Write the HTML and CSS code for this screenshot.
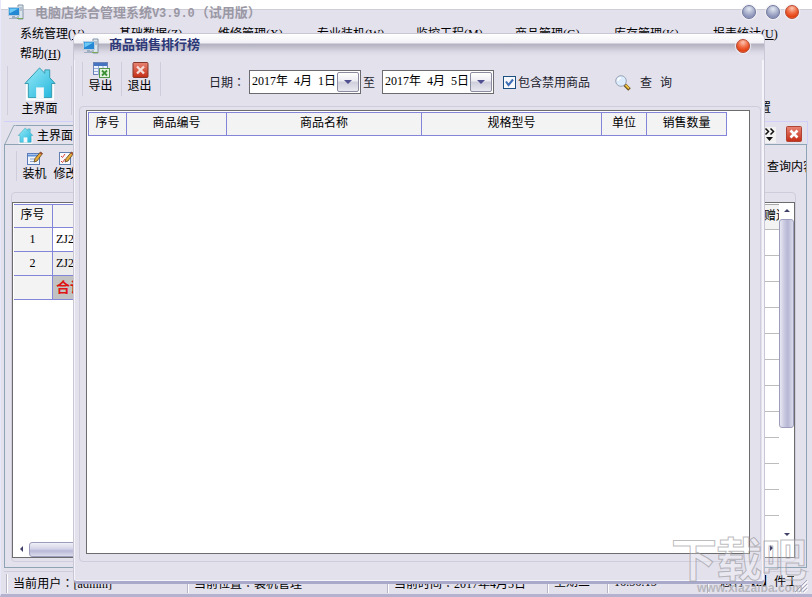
FILE: index.html
```html
<!doctype html>
<html lang="zh-CN">
	<head>
		<meta charset="utf-8" />
		<title>电脑店综合管理系统V3.9.0</title>
		<link rel="stylesheet" href="styles.css">
	</head>
	<body>
		<svg class="symbols">
			<defs>
				<linearGradient id="g_cyan" x1="0" y1="0" x2="1" y2="1">
					<stop offset="0" stop-color="#9cecf8"/>
					<stop offset="1" stop-color="#1eb4dc"/>
				</linearGradient>
				<linearGradient id="g_red" x1="0" y1="0" x2="0" y2="1">
					<stop offset="0" stop-color="#e88474"/>
					<stop offset="1" stop-color="#c42c14"/>
				</linearGradient>
			</defs>
			<symbol id="i_computer" viewBox="0 0 16 16">
				<path d="M10 1h5v14h-5z" fill="#dce4ec" stroke="#8496a8"/>
				<path d="M11 4h3M11 6h3" stroke="#8c9cac"/>
				<path d="M.5 3.500h11v8h-11z" fill="#2488d4" stroke="#b8cce0"/>
				<path d="M1.500 4.500h9l-9 5z" fill="#6cc8f4"/>
				<path d="M4 12h3v1h2v2H1v-1h3z" fill="#a0b0c0"/>
				<path d="M9 14.500h6" stroke="#78aa58"/>
			</symbol>
			<symbol id="i_house" viewBox="0 0 34 36">
				<path d="M4 17v17h26V17" fill="#fff" stroke="#fff" stroke-width="3"/>
				<path d="M16.500 2L1.500 18H5v14.500h24V18h3.500L27 12V4h-5v3.500z" fill="url(#g_cyan)" stroke="#3498ac"/>
				<path d="M13 22h8v11h-8z" fill="#f4f8fa"/>
			</symbol>
			<symbol id="i_pencil" viewBox="0 0 10 12">
				<path d="M1 11l1-3.500L7.500 1l2 1.500L4 10z" fill="#e8ac38" stroke="#5c4420" stroke-width=".8"/>
				<path d="M7 1.500l2 1.800" stroke="#a04838" stroke-width="1.500"/>
			</symbol>
			<symbol id="i_close" viewBox="0 0 16 16">
				<rect x=".5" y=".5" width="15" height="15" rx="1" fill="url(#g_red)" stroke="#b04434"/>
				<path d="M4.500 4.500l7 7M11.500 4.500l-7 7" stroke="#fff" stroke-width="2.600"/>
			</symbol>
		</svg>

		<div class="main_window">
			<header class="main_title">
				<svg class="title_icon"><use href="#i_computer"/></svg>
				<span class="title_text">电脑店综合管理系统<span class="version">V3.9.0</span><span class="trial">（试用版）</span></span>
				<span class="ball"></span>
				<span class="ball ball_max"></span>
				<span class="ball ball_red"></span>
			</header>
			<nav class="menu">
				<span>系统管理(<u>V</u>)</span>
				<span>基础数据(<u>Z</u>)</span>
				<span>维修管理(<u>X</u>)</span>
				<span>专业装机(<u>W</u>)</span>
				<span>监控工程(<u>M</u>)</span>
				<span>商品管理(<u>G</u>)</span>
				<span>库存管理(<u>K</u>)</span>
				<span>报表统计(<u>U</u>)</span>
				<span>帮助(<u>H</u>)</span>
			</nav>
			<div class="big_bar">
				<div class="big_button">
					<svg class="big_house"><use href="#i_house"/></svg>
					<span>主界面</span>
				</div>
				<div class="big_right">设置</div>
			</div>
			<div class="tabs">
				<svg class="tab_edge" viewBox="0 0 12 21"><path d="M.5 20.500L10 .5H12" fill="none" stroke="#8ea4b4"/></svg>
				<div class="tab">
					<svg class="tab_house"><use href="#i_house"/></svg>
					<span>主界面</span>
				</div>
				<div class="tab_fill"></div>
				<div class="tab_tools">
					<svg class="more" viewBox="0 0 12 16"><path d="M1.500 1.500l3 3-3 3M6.500 1.500l3 3-3 3" fill="none" stroke="#111" stroke-width="1.500"/><path d="M2 10h7l-3.500 4z" fill="#111"/></svg>
					<svg class="tab_close"><use href="#i_close"/></svg>
				</div>
			</div>
			<div class="page">
				<div class="page_bar">
					<div class="small_button">
						<svg class="small_icon" viewBox="0 0 16 15">
							<rect x=".5" y="2.500" width="12" height="11" fill="#f0f4fc" stroke="#5c7cb8"/>
							<path d="M1 3.500h11v2H1z" fill="#5c90d8"/>
							<path d="M3 8h6M3 10.500h4" stroke="#8ca4cc"/>
							<use href="#i_pencil" x="6" y="0" width="10" height="12"/>
						</svg>
						<span>装机</span>
					</div>
					<div class="small_button">
						<svg class="small_icon" viewBox="0 0 16 15">
							<rect x="1.500" y="1.500" width="11" height="12" fill="#fafafe" stroke="#6080b0"/>
							<path d="M3 5l1.500 1.500L7 3M3 10l1.500 1.500L7 8" fill="none" stroke="#d8443c"/>
							<use href="#i_pencil" x="6" y="0" width="10" height="12"/>
						</svg>
						<span>修改</span>
					</div>
					<div class="find_label">查询内容</div>
				</div>
				<div class="group">
					<div class="list">
						<div class="list_left">
							<div class="row head"><b>序号</b><i></i></div>
							<div class="row"><b>1</b><i>ZJ20170405</i></div>
							<div class="row even"><b>2</b><i>ZJ20170405</i></div>
							<div class="row total"><b></b><i>合计</i></div>
							<div class="hscroll"><span class="arrow_left"></span><span class="hthumb"></span></div>
						</div>
						<div class="list_right">
							<div class="gift">赠送</div>
							<div class="lines"></div>
							<span class="arrow_right"></span>
						</div>
						<div class="vscroll">
							<span class="arrow_up"></span>
							<span class="vthumb"></span>
							<span class="arrow_down"></span>
						</div>
					</div>
				</div>
			</div>
			<footer class="status">
				<span class="s_user">当前用户<em lang="zh-TW">：</em>[admin]</span>
				<span class="s_place">当前位置<em lang="zh-TW">：</em>装机管理</span>
				<span class="s_time">当前时间<em lang="zh-TW">：</em>2017年4月5日</span>
				<span class="s_week">星期三</span>
				<span class="s_clock">16:56:15</span>
				<span class="s_count">您有【2】件工</span>
				<svg class="grip" viewBox="0 0 14 14"><path d="M1 13L13 1M5 13l8-8M9 13l4-4" stroke="#a8a6b8"/><path d="M2 14L14 2M6 14l8-8M10 14l4-4" stroke="#fff"/></svg>
			</footer>
		</div>

		<div class="dialog">
			<header class="dialog_title">
				<svg class="title_icon"><use href="#i_computer"/></svg>
				<span>商品销售排行榜</span>
				<span class="ball ball_red"></span>
			</header>
			<div class="dialog_bar">
				<div class="tool">
					<svg viewBox="0 0 17 16">
						<rect x=".5" y=".5" width="14" height="12" fill="#eef2fc" stroke="#6c84b8"/>
						<path d="M1 1h13v3H1z" fill="#4474c0"/>
						<path d="M1 6.500h13M1 9.500h13M5.500 4v9M10 4v9" stroke="#98acd8"/>
						<rect x="6.500" y="6.500" width="10" height="9" fill="#e4f4e0" stroke="#58984c"/>
						<path d="M9 8.500l5 5M14 8.500l-5 5" stroke="#3c9034" stroke-width="1.800"/>
					</svg>
					<span>导出</span>
				</div>
				<div class="tool">
					<svg viewBox="0 0 16 16">
						<rect x=".5" y=".5" width="15" height="15" rx="1" fill="url(#g_red)" stroke="#84382c"/>
						<path d="M4.500 4.500l7 7M11.500 4.500l-7 7" stroke="#f4dcd8" stroke-width="2.400"/>
					</svg>
					<span>退出</span>
				</div>
				<div class="filter">
					<label>日期<em lang="zh-TW">：</em></label>
					<div class="date"><span>2017年 4月 1日</span><button></button></div>
					<span class="to">至</span>
					<div class="date"><span>2017年 4月 5日</span><button></button></div>
					<svg class="check" viewBox="0 0 13 13"><rect x=".5" y=".5" width="12" height="12" fill="#f6f8fc" stroke="#1c5080"/><path d="M3 5.500l2.500 3.500L10 3.500" fill="none" stroke="#3c6cb4" stroke-width="2"/></svg>
					<span class="check_text">包含禁用商品</span>
					<svg class="lens" viewBox="0 0 16 16"><path d="M9.500 9.500l5 5" stroke="#6c5020" stroke-width="3.500"/><path d="M10.500 10l3.500 3.500" stroke="#ecc040" stroke-width="1.800"/><circle cx="6" cy="6" r="5.300" fill="#dcecfc" stroke="#98a4b8"/><path d="M3 6a3 3 0 0 1 3-3" fill="none" stroke="#fff" stroke-width="1.500"/></svg>
					<span class="query">查 询</span>
				</div>
			</div>
			<div class="dialog_group">
				<div class="grid">
					<div class="grid_head">
						<span>序号</span>
						<span>商品编号</span>
						<span>商品名称</span>
						<span>规格型号</span>
						<span>单位</span>
						<span>销售数量</span>
					</div>
				</div>
			</div>
		</div>

		<div class="watermark">
			<div class="watermark_name">下载吧</div>
			<div class="watermark_site">www.xiazaiba.com</div>
		</div>
	</body>
</html>
```
FILE: styles.css
```css
* {
	box-sizing : border-box;
}
body {
	position : relative;
	width : 812px;
	height : 597px;
	margin : 0;
	overflow : hidden;
	background-color : #fff;
	color : #000;
	font : 12px/14px "Liberation Serif", "Noto Sans CJK SC", sans-serif;
	white-space : nowrap;
}
svg {
	display : block;
	flex : none;
}
em {
	font-family : "Noto Sans CJK TC", sans-serif;
	font-style : normal;
}
.symbols {
	position : absolute;
	width : 0;
	height : 0;
}
.title_icon {
	width : 16px;
	height : 16px;
}
.ball {
	width : 14px;
	height : 14px;
	border : 1px solid #70789c;
	border-radius : 50%;
	background : radial-gradient(circle at 50% 25%, #e4e8f4, #a4acc8 50%, #8890b8 75%, #b8c0dc);
	box-shadow : 0 0 1px 1px #f2f0f4;
}
.ball_red {
	border-color : #b84830;
	background : radial-gradient(circle at 50% 20%, #fcc4b0, #f06840 45%, #e44010 75%, #fc9060);
}

/* main window */
.main_window {
	display : flex;
	flex-direction : column;
	height : 597px;
	background : #e3e1ec;
	border-left : 1px solid #e8e8fa;
	border-bottom : 3px solid #b4b2ce;
}
.main_title {
	display : flex;
	height : 25px;
	padding : 4px 13px 0 7px;
	background : linear-gradient(#fff 9px, #cfcdd9 9px, #cfcdd9 10px, #e3e1ec 10px);
}
.title_text {
	flex : 1;
	padding-left : 11px;
	color : #9a98a4;
	font : bold 13px/15px "Noto Sans CJK SC", sans-serif;
}
.version {
	font : bold 12px/14px "Liberation Mono", monospace;
	letter-spacing : -.1px;
}
.trial {
	padding-left : 1px;
}
.main_title .ball {
	margin-top : 1px;
}
.ball_max {
	margin-left : 10px;
}
.main_title .ball_red {
	margin-left : 5px;
}
.menu {
	display : grid;
	grid-template-columns : repeat(8, 99px);
	grid-auto-rows : 20px;
	height : 38px;
	padding-left : 19px;
	line-height : 19px;
}
.big_bar {
	display : flex;
	justify-content : space-between;
	height : 58px;
	padding : 3px 41px 0 6px;
}
.big_button {
	display : flex;
	flex-direction : column;
	align-items : center;
	width : 65px;
	height : 49px;
	border-left : 1px solid #cfcddb;
	border-right : 1px solid #cfcddb;
}
.big_house {
	width : 34px;
	height : 35px;
	margin-bottom : 1px;
}
.big_right {
	padding-top : 35px;
}
.tabs {
	display : flex;
	height : 24px;
	margin : 0 4px 0 3px;
	padding-top : 3px;
	border-top : 1px solid #cfcffa;
	border-right : 1px solid #cfcffa;
}
.tab_edge {
	width : 12px;
	height : 20px;
}
.tab {
	display : flex;
	align-items : center;
	gap : 3px;
	height : 20px;
	width : 62px;
	border-top : 1px solid #8ea4b4;
}
.tab_house {
	width : 17px;
	height : 17px;
	margin-left : 1px;
}
.tab_fill {
	flex : 1;
}
.tab_tools {
	display : flex;
	align-items : center;
	gap : 10px;
	padding-right : 5px;
}
.more {
	width : 12px;
	height : 16px;
	background : #f2f2f2;
}
.tab_close {
	width : 16px;
	height : 16px;
	margin-bottom : 3px;
}
.page {
	display : flex;
	flex-direction : column;
	height : 424px;
	margin : -1px 5px 0 3px;
	border : 1px solid #8ea4b4;
}
.page_bar {
	display : flex;
	height : 47px;
	padding-top : 6px;
	overflow : hidden;
}
.page_bar::before {
	content : "";
	width : 1px;
	height : 30px;
	margin-left : 11px;
	background : #cfcddb;
}
.small_button {
	display : flex;
	flex-direction : column;
	align-items : center;
	gap : 1px;
	width : 25px;
	margin-left : 5px;
}
.small_button + .small_button {
	margin-left : 6px;
}
.small_icon {
	width : 16px;
	height : 15px;
}
.find_label {
	width : 39px;
	margin-left : auto;
	padding-top : 9px;
	overflow : hidden;
}
.group {
	height : 370px;
	margin : 0 10px 0 6px;
	padding-top : 9px;
	border : 1px solid #cfcddb;
	border-radius : 4px;
}
.list {
	display : flex;
	height : 356px;
	border : 1px solid #6c6c6c;
	background : #fff;
	overflow : hidden;
}
.list_left {
	display : flex;
	flex-direction : column;
	width : 740px;
	padding : 1px 0 0 1px;
}
.row {
	display : flex;
	height : 24px;
	line-height : 23px;
	border-bottom : 1px solid #8484d8;
}
.row b {
	width : 39px;
	padding-right : 1px;
	border-right : 1px solid #8484d8;
	background : #f3f3f4;
	font-weight : normal;
	text-align : center;
}
.row i {
	flex : 1;
	padding-left : 3px;
	font-style : normal;
}
.head {
	border-top : 1px solid #8484d8;
	line-height : 21px;
}
.head i {
	background : #f3f3f4;
}
.even i {
	background : #ececec;
}
.total i {
	background : #c2c2c2;
	color : #e01414;
	font-size : 14px;
	font-weight : bold;
}
.hscroll {
	display : flex;
	align-items : center;
	gap : 6px;
	height : 16px;
	margin-top : auto;
	padding-left : 6px;
}
.hthumb {
	width : 300px;
	height : 15px;
	border : 1px solid #9c9cbc;
	border-radius : 3px;
	background : linear-gradient(#f0f0f8, #d4d4e8 45%, #b8b8d8 60%, #dcdcec);
}
.arrow_left {
	border : 3px solid transparent;
	border-left : 0;
	border-right-color : #404068;
}
.arrow_right {
	width : 0;
	margin : auto auto 6px 17px;
	border : 3px solid transparent;
	border-right : 0;
	border-left-color : #404068;
}
.list_right {
	display : flex;
	flex-direction : column;
	width : 26px;
	padding-top : 1px;
	overflow : hidden;
}
.gift {
	height : 25px;
	padding-left : 11px;
	border-top : 1px solid #a8a8a8;
	background : #f3f3f4;
	line-height : 22px;
}
.lines {
	height : 288px;
	background : repeating-linear-gradient(#bcbcbc 0, #bcbcbc 1px, #fff 1px, #fff 26px);
}
.vscroll {
	display : flex;
	flex-direction : column;
	align-items : center;
	width : 15px;
	padding : 6px 0 21px;
}
.vthumb {
	width : 15px;
	height : 209px;
	margin-top : 7px;
	border : 1px solid #9c9cbc;
	border-radius : 3px;
	background : linear-gradient(90deg, #e8e8f2, #c8c8e0 35%, #b6b6d4 60%, #dcdcec);
}
.arrow_up {
	border : 3px solid transparent;
	border-top : 0;
	border-bottom-color : #404068;
}
.arrow_down {
	margin-top : auto;
	border : 3px solid transparent;
	border-bottom : 0;
	border-top-color : #404068;
}
.status {
	display : flex;
	height : 23px;
	margin : 3px 3px 0;
	border-top : 1px solid #cfcddb;
	line-height : 22px;
}
.status span {
	height : 19px;
	margin-top : 2px;
	padding-left : 6px;
	border-left : 1px solid #b8b6c6;
	box-shadow : inset 1px 0 #fff;
	line-height : 17px;
}
.status .s_user {
	width : 181px;
	margin-left : 2px;
	letter-spacing : .1px;
}
.status .s_place {
	width : 200px;
}
.status .s_time {
	width : 160px;
}
.status .s_week {
	width : 60px;
}
.status .s_clock {
	width : 100px;
}
.status .s_count {
	width : 87px;
	padding-left : 12px;
	overflow : hidden;
}
.grip {
	width : 14px;
	height : 14px;
	margin-top : 7px;
}

/* ranking dialog */
.dialog {
	position : absolute;
	left : 73px;
	top : 33px;
	width : 692px;
	height : 551px;
	border : 1px solid #c9c7d6;
	border-bottom : 3px solid #a9a9ca;
	border-radius : 6px 6px 5px 5px;
	background : #e3e1ec;
	box-shadow : inset 1px 0 #f4f4fa, inset -2px 0 #f4f4fa, inset 0 -1px #f4f4fa;
}
.dialog_title {
	display : flex;
	height : 26px;
	padding : 4px 14px 0 9px;
	border-radius : 5px 5px 0 0;
	background : linear-gradient(#fff 0, #f2f1f6 9px, #b2b1c0 10px, #c6c4d1 14px, #dbd9e5 18px, #e3e1ec 22px);
	color : #2c3878;
	font-size : 13px;
	font-weight : bold;
	line-height : 14px;
}
.dialog_title > span:first-of-type {
	flex : 1;
	padding-left : 10px;
}
.dialog_title .ball {
	margin-top : 1px;
}
.dialog_bar {
	display : flex;
	height : 46px;
	padding : 2px 0 0 8px;
}
.tool {
	display : flex;
	flex-direction : column;
	align-items : center;
	width : 39px;
	height : 34px;
	padding-right : 3px;
	border-left : 1px solid #cfcddb;
}
.tool svg {
	width : 17px;
	height : 16px;
	margin : 0 0 1px 1px;
}
.filter {
	display : flex;
	align-items : center;
	height : 34px;
	padding-left : 48px;
	border-left : 1px solid #cfcddb;
	color : #1c1c2c;
}
.filter label {
	width : 40px;
	padding-top : 7px;
}
.date {
	display : flex;
	width : 112px;
	height : 24px;
	margin-top : 5px;
	padding : 1px;
	border : 1px solid #6c6c70;
	background : #fff;
	color : #000;
}
.date span {
	width : 86px;
	padding-left : 1px;
	line-height : 18px;
	word-spacing : 3px;
}
.date button {
	width : 22px;
	height : 20px;
	padding : 0 6px;
	border : 1px solid #8c8ca0;
	border-radius : 2px;
	background : linear-gradient(#fff, #ececf2 45%, #cfcfdc 50%, #e8e8f0);
}
.date button::before {
	content : "";
	display : block;
	border : 4px solid transparent;
	border-top-color : #505090;
	border-bottom : 0;
}
.to {
	width : 21px;
	padding : 8px 0 0 2px;
}
.check {
	width : 13px;
	height : 13px;
	margin : 6px 2px 0 9px;
}
.check_text {
	width : 97px;
	padding-top : 8px;
}
.lens {
	width : 16px;
	height : 16px;
	margin : 8px 9px 0 0;
}
.query {
	padding-top : 8px;
	word-spacing : 5px;
}
.dialog_group {
	height : 456px;
	margin : 0 3px 0 5px;
	padding : 3px 10px 0 6px;
	border : 1px solid #cfcddb;
	border-radius : 4px;
}
.grid {
	height : 444px;
	padding : 1px;
	border : 1px solid #6c6c6c;
	background : #fff;
}
.grid_head {
	display : grid;
	grid-template-columns : 38px 100px 195px 180px 45px 80px;
	width : 639px;
	height : 24px;
	border : 1px solid #8484d8;
	border-right : 0;
	background : #f3f3f4;
	line-height : 21px;
	text-align : center;
}
.grid_head span {
	border-right : 1px solid #8484d8;
}

/* site mark over both windows */
.watermark {
	position : absolute;
	left : 671px;
	top : 531px;
	width : 140px;
	font-family : "Noto Sans CJK SC", sans-serif;
}
.watermark_name {
	color : rgba(255, 255, 255, .25);
	font-size : 46px;
	font-weight : bold;
	line-height : 50px;
	letter-spacing : -1px;
	-webkit-text-stroke : 1px rgba(150, 150, 155, .65);
}
.watermark_site {
	padding-left : 26px;
	color : rgba(165, 165, 170, .7);
	font : bold 12px/14px "Liberation Sans", sans-serif;
}
```
